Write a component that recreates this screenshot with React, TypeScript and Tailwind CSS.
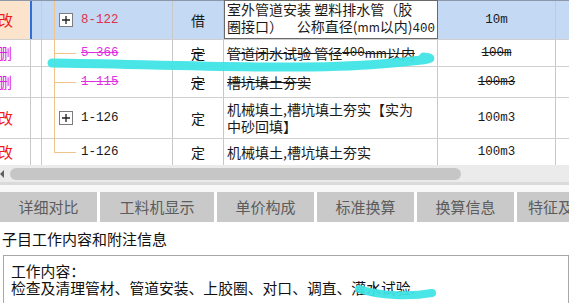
import React from "react";

const CJK = "font-['Noto_Sans_CJK_SC','Noto_Sans',sans-serif]";
const MONO = "font-['Liberation_Mono','Noto_Sans_CJK_SC',monospace]";

function PlusBox() {
  return (
    <div className="w-[14px] h-[14px] border border-[#7c7c7c] bg-white flex items-center justify-center shrink-0">
      <svg width="10" height="10" viewBox="0 0 10 10">
        <path d="M1 5H9M5 1V9" stroke="#202020" strokeWidth="1.3" />
      </svg>
    </div>
  );
}

export default function App() {
  return (
    <div className={`relative w-[569px] h-[303px] overflow-hidden bg-white ${CJK} text-[14px] text-[#1a1a1a]`}>
      {/* grid */}
      <div className="relative w-full">
        {/* row 0 */}
        <div className="flex h-[40px] border-t border-b border-t-[#8c98aa] border-b-[#cfcfcf]">
          <div className="w-[30px] bg-[#fce3cc] flex items-center text-[#f01c1c] text-[15px] pl-[0px] overflow-hidden">
            <span className="-ml-[2px]">改</span>
          </div>
          <div className="w-[143px] bg-[#c4d9f3] border-l-2 border-[#2f6fd6] border-r border-r-[#c8c8c8] flex items-center pl-[27px] gap-[8px]">
            <PlusBox />
            <span className={`${MONO} text-[12.5px] text-[#e0304c]`}>8-122</span>
          </div>
          <div className="w-[51px] bg-[#c4d9f3] border-r border-[#c8c8c8] flex items-center justify-center">借</div>
          <div className="w-[214px] bg-white border border-[#6a6a6a] -mt-px flex flex-col justify-center px-[2px] leading-[17px] whitespace-nowrap overflow-hidden">
            <div>室外管道安装 塑料排水管（胶</div>
            <div className="flex justify-between">
              <span>圈接口）</span>
              <span>公称直径(<span className="text-[12px]">mm</span>以内)<span className={`${MONO} text-[12.5px]`}>400</span></span>
            </div>
          </div>
          <div className={`w-[118px] bg-[#c4d9f3] border-r border-[#c8c8c8] flex items-center justify-center ${MONO} text-[12.5px]`}>10m</div>
          <div className="flex-1 bg-[#c4d9f3]" />
        </div>
        {/* row 1 */}
        <div className="flex h-[27px] border-b border-[#cfcfcf]">
          <div className="w-[31px] border-r border-[#c8c8c8] flex items-center text-[#e020e0] text-[15px] overflow-hidden">
            <span className="-ml-[3px]">删</span>
          </div>
          <div className="w-[142px] border-r border-[#c8c8c8] flex items-center pl-[50px]">
            <span className={`${MONO} text-[12.5px] text-[#e030e0] line-through`}>5-366</span>
          </div>
          <div className="w-[51px] border-r border-[#c8c8c8] flex items-center justify-center line-through">定</div>
          <div className="w-[214px] border-r border-[#c8c8c8] flex items-center px-[3px] whitespace-nowrap overflow-hidden line-through">
            管道闭水试验 管径<span className={`${MONO} text-[12.5px]`}>400</span><span className="text-[12px]">mm</span>以内
          </div>
          <div className={`w-[118px] border-r border-[#c8c8c8] flex items-center justify-center ${MONO} text-[12.5px] line-through`}>100m</div>
          <div className="flex-1" />
        </div>
        {/* row 2 */}
        <div className="flex h-[31px] border-b border-[#cfcfcf]">
          <div className="w-[31px] border-r border-[#c8c8c8] flex items-center text-[#e020e0] text-[15px] overflow-hidden">
            <span className="-ml-[3px]">删</span>
          </div>
          <div className="w-[142px] border-r border-[#c8c8c8] flex items-center pl-[50px]">
            <span className={`${MONO} text-[12.5px] text-[#e030e0] line-through`}>1-115</span>
          </div>
          <div className="w-[51px] border-r border-[#c8c8c8] flex items-center justify-center line-through">定</div>
          <div className="w-[214px] border-r border-[#c8c8c8] flex items-center px-[3px] whitespace-nowrap overflow-hidden line-through">
            槽坑填土夯实
          </div>
          <div className={`w-[118px] border-r border-[#c8c8c8] flex items-center justify-center ${MONO} text-[12.5px] line-through`}>100m3</div>
          <div className="flex-1" />
        </div>
        {/* row 3 */}
        <div className="flex h-[41px] border-b border-[#cfcfcf]">
          <div className="w-[31px] border-r border-[#c8c8c8] flex items-center text-[#f01c1c] text-[15px] overflow-hidden">
            <span className="-ml-[2px]">改</span>
          </div>
          <div className="w-[142px] border-r border-[#c8c8c8] flex items-center pl-[28px] gap-[8px]">
            <PlusBox />
            <span className={`${MONO} text-[12.5px]`}>1-126</span>
          </div>
          <div className="w-[51px] border-r border-[#c8c8c8] flex items-center justify-center">定</div>
          <div className="w-[214px] border-r border-[#c8c8c8] flex flex-col justify-center px-[3px] leading-[17px] whitespace-nowrap overflow-hidden">
            <div>机械填土,槽坑填土夯实【实为</div>
            <div>中砂回填】</div>
          </div>
          <div className={`w-[118px] border-r border-[#c8c8c8] flex items-center justify-center ${MONO} text-[12.5px]`}>100m3</div>
          <div className="flex-1" />
        </div>
        {/* row 4 */}
        <div className="flex h-[26px]">
          <div className="w-[31px] border-r border-[#c8c8c8] flex items-center text-[#f01c1c] text-[15px] overflow-hidden">
            <span className="-ml-[2px]">改</span>
          </div>
          <div className="w-[142px] border-r border-[#c8c8c8] flex items-center pl-[50px]">
            <span className={`${MONO} text-[12.5px]`}>1-126</span>
          </div>
          <div className="w-[51px] border-r border-[#c8c8c8] flex items-center justify-center">定</div>
          <div className="w-[214px] border-r border-[#c8c8c8] flex items-center px-[3px] whitespace-nowrap overflow-hidden">
            机械填土,槽坑填土夯实
          </div>
          <div className={`w-[118px] border-r border-[#c8c8c8] flex items-center justify-center ${MONO} text-[12.5px]`}>100m3</div>
          <div className="flex-1" />
        </div>

        {/* tree lines */}
        <svg className="absolute left-0 top-0 pointer-events-none" width="569" height="165" viewBox="0 0 569 165">
          <g stroke="#f0c48c" strokeWidth="1" fill="none">
            <path d="M41.5 1V165" />
            <path d="M54.5 1V152.5" />
            <path d="M54 53.5H76" />
            <path d="M54 82.5H76" />
            <path d="M54 152.5H76" />
          </g>
        </svg>
      </div>

      {/* horizontal scrollbar */}
      <div className="h-[17px] bg-[#ebebeb] flex items-center">
        <svg width="6" height="10" viewBox="0 0 6 10" className="shrink-0">
          <path d="M4 1L0 5L4 9Z" fill="#606060" />
        </svg>
        <div className="ml-[4px] w-[451px] h-[12px] rounded-full bg-[#c6c6c6]" />
      </div>
      <div className="h-[10px] border-t-[3px] border-[#dadada] bg-[#f7f7f7]" />

      {/* tabs */}
      <div className="flex gap-[3px] h-[30px] text-[15px] text-[#5c5c5c] whitespace-nowrap">
        <div className="w-[97px] shrink-0 bg-[#c9c9c9] flex items-center justify-center">详细对比</div>
        <div className="w-[114px] shrink-0 bg-[#c9c9c9] flex items-center justify-center">工料机显示</div>
        <div className="w-[97px] shrink-0 bg-[#c9c9c9] flex items-center justify-center">单价构成</div>
        <div className="w-[97px] shrink-0 bg-[#c9c9c9] flex items-center justify-center">标准换算</div>
        <div className="w-[97px] shrink-0 bg-[#c9c9c9] flex items-center justify-center">换算信息</div>
        <div className="w-[97px] shrink-0 bg-[#c9c9c9] flex items-center justify-center">特征及内容</div>
      </div>

      {/* title */}
      <div className="h-[33px] pt-[8px] pl-[2px] leading-[18px] text-[15px] text-[#111]">子目工作内容和附注信息</div>

      {/* content box */}
      <div className="ml-[3px] h-[60px] border border-[#a8a8a8] pl-[7px] pt-[6px] text-[14.8px] leading-[17px] text-[#111]">
        <div>工作内容：</div>
        <div className="whitespace-nowrap">检查及清理管材、管道安装、上胶圈、对口、调直、灌水试验.</div>
      </div>

      {/* cyan highlight strokes */}
      <svg className="absolute left-0 top-0 pointer-events-none" width="569" height="303" viewBox="0 0 569 303">
        <g stroke="#3fe4e6" strokeLinecap="round" fill="none" opacity="0.95">
          <path d="M52 63 C150 64 300 71 380 64 S418 58 424 57" strokeWidth="9" />
          <path d="M359 289 C380 296 410 297 432 293" strokeWidth="8" />
        </g>
      </svg>
    </div>
  );
}
